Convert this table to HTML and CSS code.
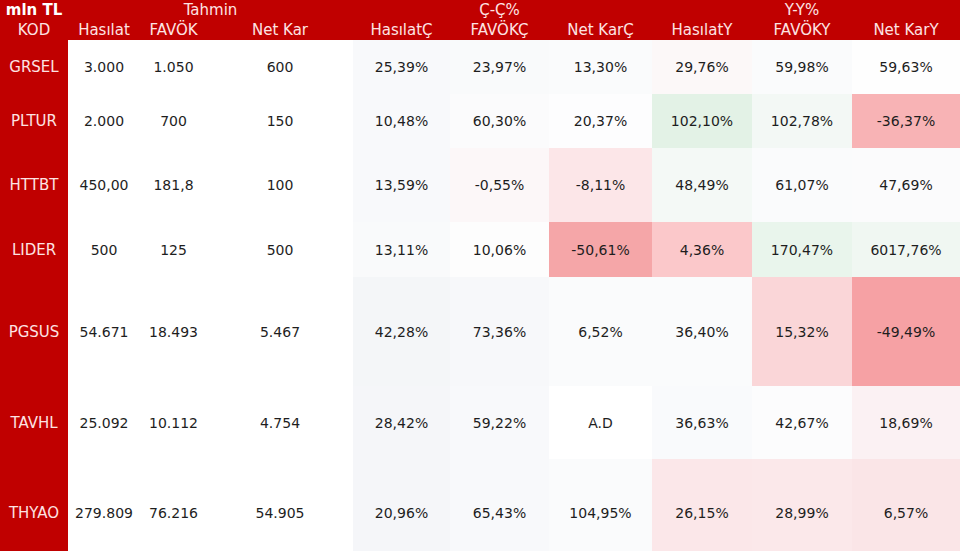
FILE: index.html
```html
<!DOCTYPE html>
<html lang="tr">
<head>
<meta charset="utf-8">
<title>Tahmin tablosu</title>
<link rel="stylesheet" href="styles.css">
</head>
<body>
<table class="sheet">
  <colgroup>
    <col class="c-kod"><col class="c-has"><col class="c-fav"><col class="c-net">
    <col class="c-hc"><col class="c-fc"><col class="c-nc">
    <col class="c-hy"><col class="c-fy"><col class="c-ny">
  </colgroup>
  <thead>
    <tr class="h1">
      <th class="unit">mln TL</th>
      <th colspan="3" class="grp">Tahmin</th>
      <th></th>
      <th class="grp">Ç-Ç%</th>
      <th></th>
      <th></th>
      <th class="grp">Y-Y%</th>
      <th></th>
    </tr>
    <tr class="h2">
      <th>KOD</th>
      <th>Hasılat</th>
      <th>FAVÖK</th>
      <th>Net Kar</th>
      <th>HasılatÇ</th>
      <th>FAVÖKÇ</th>
      <th>Net KarÇ</th>
      <th>HasılatY</th>
      <th>FAVÖKY</th>
      <th>Net KarY</th>
    </tr>
  </thead>
  <tbody>
    <tr class="r-54">
      <th>GRSEL</th><td>3.000</td><td>1.050</td><td>600</td>
      <td style="background:#f8f9fb">25,39%</td><td style="background:#f9fafb">23,97%</td><td style="background:#fafbfc">13,30%</td>
      <td style="background:#fcf8f8">29,76%</td><td style="background:#fafbfc">59,98%</td><td style="background:#fefefe">59,63%</td>
    </tr>
    <tr class="r-54">
      <th>PLTUR</th><td>2.000</td><td>700</td><td>150</td>
      <td style="background:#f8f9fb">10,48%</td><td style="background:#fbfbfc">60,30%</td><td style="background:#fdfdfe">20,37%</td>
      <td style="background:#e3f2e6">102,10%</td><td style="background:#f3f8f5">102,78%</td><td style="background:#f8b3b5">-36,37%</td>
    </tr>
    <tr class="r-74">
      <th>HTTBT</th><td>450,00</td><td>181,8</td><td>100</td>
      <td style="background:#f8f9fb">13,59%</td><td style="background:#fcf7f8">-0,55%</td><td style="background:#fce6e8">-8,11%</td>
      <td style="background:#f4f9f6">48,49%</td><td style="background:#fafbfc">61,07%</td><td style="background:#fbfbfc">47,69%</td>
    </tr>
    <tr class="r-55">
      <th>LIDER</th><td>500</td><td>125</td><td>500</td>
      <td style="background:#f9fafb">13,11%</td><td style="background:#fdfdfd">10,06%</td><td style="background:#f5a6a8">-50,61%</td>
      <td style="background:#fbc8ca">4,36%</td><td style="background:#e9f5ec">170,47%</td><td style="background:#f0f7f2">6017,76%</td>
    </tr>
    <tr class="r-109">
      <th>PGSUS</th><td>54.671</td><td>18.493</td><td>5.467</td>
      <td style="background:#f4f6f8">42,28%</td><td style="background:#f7f8fa">73,36%</td><td style="background:#fafbfc">6,52%</td>
      <td style="background:#fafbfc">36,40%</td><td style="background:#fad6d8">15,32%</td><td style="background:#f6a1a4">-49,49%</td>
    </tr>
    <tr class="r-73">
      <th>TAVHL</th><td>25.092</td><td>10.112</td><td>4.754</td>
      <td style="background:#f5f6f9">28,42%</td><td style="background:#f8f9fb">59,22%</td><td style="background:#ffffff">A.D</td>
      <td style="background:#f9fafc">36,63%</td><td style="background:#fcfcfd">42,67%</td><td style="background:#fbf1f3">18,69%</td>
    </tr>
    <tr class="r-108">
      <th>THYAO</th><td>279.809</td><td>76.216</td><td>54.905</td>
      <td style="background:#f5f6f9">20,96%</td><td style="background:#f8f9fb">65,43%</td><td style="background:#fafbfc">104,95%</td>
      <td style="background:#fbe7e9">26,15%</td><td style="background:#fbe8ea">28,99%</td><td style="background:#fae5e7">6,57%</td>
    </tr>
  </tbody>
</table>
</body>
</html>
```

FILE: styles.css
```css
html, body {
  margin: 0;
  padding: 0;
  background: #ffffff;
  overflow: hidden;
}

body {
  font-family: "DejaVu Sans", "Liberation Sans", sans-serif;
  font-size: 14px;
  color: #1e1e1e;
}

.sheet {
  border-collapse: collapse;
  border-spacing: 0;
  table-layout: fixed;
  width: 960px;
}

.sheet th,
.sheet td {
  padding: 0;
  text-align: center;
  vertical-align: middle;
  white-space: nowrap;
  font-weight: normal;
}

.c-kod { width: 68px; }
.c-has { width: 72px; }
.c-fav { width: 67px; }
.c-net { width: 146px; }
.c-hc  { width: 97px; }
.c-fc  { width: 99px; }
.c-nc  { width: 103px; }
.c-hy  { width: 100px; }
.c-fy  { width: 100px; }
.c-ny  { width: 108px; }

thead tr {
  background: #c00000;
  height: 20px;
}

.sheet thead th {
  color: #fde3e3;
  font-size: 15px;
  line-height: 20px;
  height: 20px;
}

.sheet .unit {
  color: #ffffff;
  font-weight: bold;
  font-size: 15px;
}

.sheet tbody th {
  background: #c00000;
  color: #fde3e3;
  font-size: 15px;
}

.r-54 { height: 54px; }
.r-55 { height: 55px; }
.r-73 { height: 73px; }
.r-74 { height: 74px; }
.r-108 { height: 108px; }
.r-109 { height: 109px; }
```
